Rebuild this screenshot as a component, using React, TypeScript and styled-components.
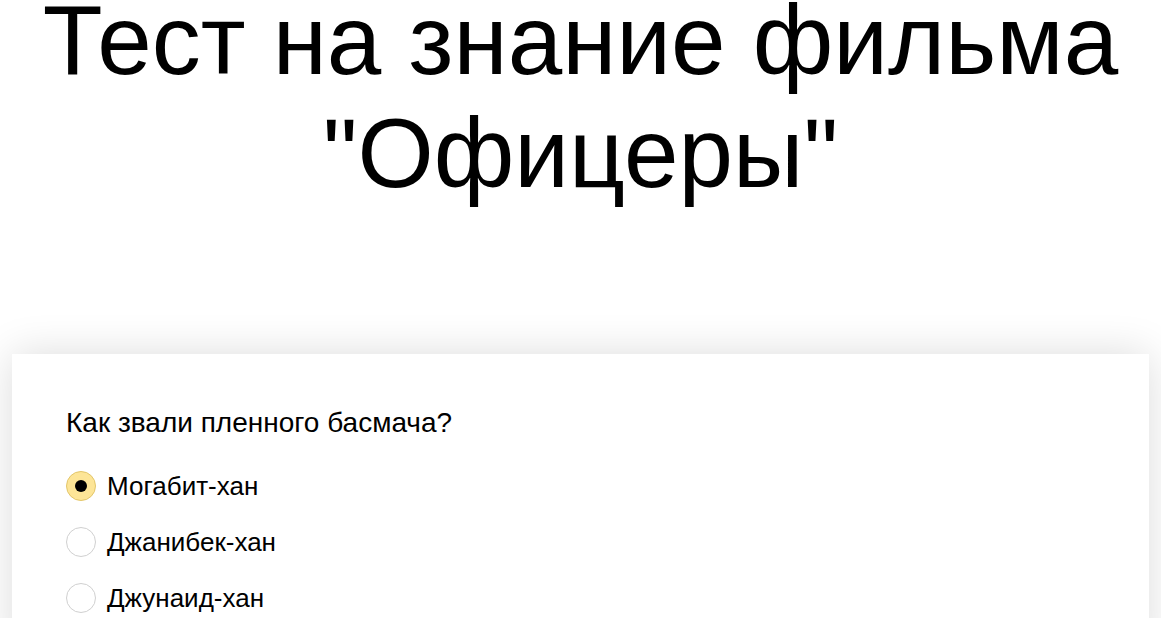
import { useState } from "react";
import styled, { createGlobalStyle } from "styled-components";

const GlobalStyle = createGlobalStyle`
  html, body {
    margin: 0;
    padding: 0;
    background: #fff;
    font-family: "Liberation Sans", Arial, sans-serif;
    color: #000;
  }
`;

const Page = styled.div`
  display: flex;
  flex-direction: column;
  padding: 0 12px;
`;

const Title = styled.h1`
  margin: -16px 0 0;
  font-size: 98px;
  font-weight: 400;
  text-align: center;
`;

const Card = styled.div`
  margin-top: 144px;
  background: #fff;
  box-shadow: 0 0 40px rgba(0, 0, 0, 0.14);
  padding: 53px 54px 40px;
  display: flex;
  flex-direction: column;
`;

const Question = styled.div`
  font-size: 28px;
  line-height: 32px;
  margin-bottom: 32px;
`;

const Options = styled.div`
  display: flex;
  flex-direction: column;
  gap: 26px;
`;

const Option = styled.label`
  display: flex;
  align-items: center;
  gap: 11px;
  font-size: 26px;
  line-height: 30px;
  cursor: pointer;
`;

const Radio = styled.span<{ $checked: boolean }>`
  width: 30px;
  height: 30px;
  box-sizing: border-box;
  border-radius: 50%;
  border: 1px solid ${(p) => (p.$checked ? "#e3c66a" : "#d0d0d0")};
  background: ${(p) => (p.$checked ? "#fde597" : "#fff")};
  display: flex;
  align-items: center;
  justify-content: center;
  flex-shrink: 0;

  &::after {
    content: "";
    width: 12px;
    height: 12px;
    border-radius: 50%;
    background: #000;
    display: ${(p) => (p.$checked ? "block" : "none")};
  }
`;

const answers = ["Могабит-хан", "Джанибек-хан", "Джунаид-хан"];

export default function App() {
  const [selected, setSelected] = useState(0);

  return (
    <>
      <GlobalStyle />
      <Page>
        <Title>Тест на знание фильма "Офицеры"</Title>
        <Card>
          <Question>Как звали пленного басмача?</Question>
          <Options>
            {answers.map((a, i) => (
              <Option key={a} onClick={() => setSelected(i)}>
                <Radio $checked={selected === i} />
                {a}
              </Option>
            ))}
          </Options>
        </Card>
      </Page>
    </>
  );
}
